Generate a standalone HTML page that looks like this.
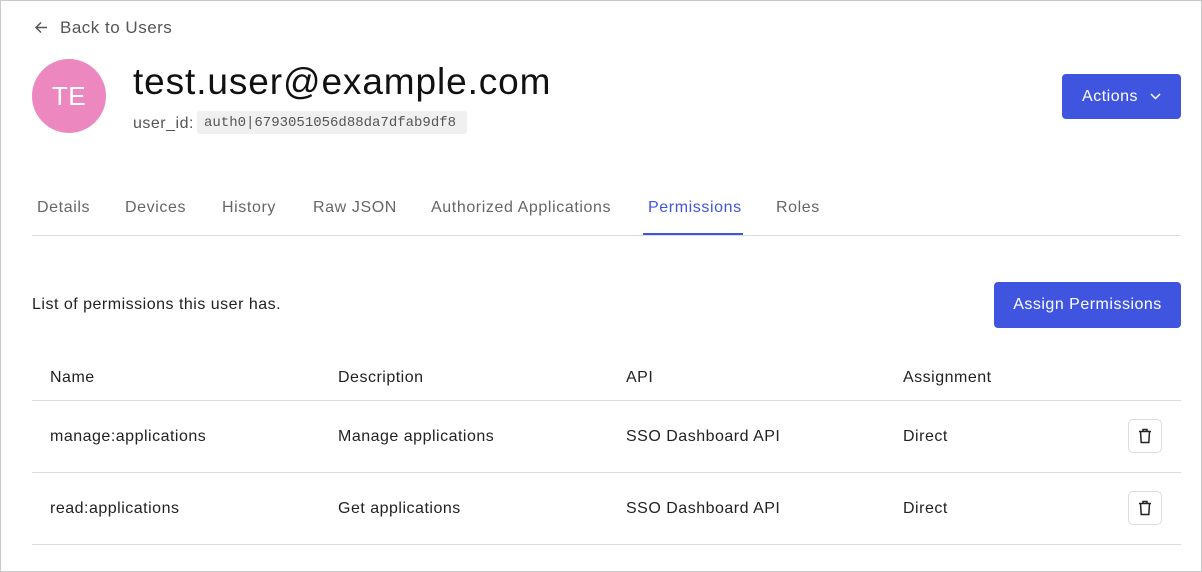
<!DOCTYPE html>
<html><head><style>
*{margin:0;padding:0;box-sizing:border-box}
body{width:1202px;height:572px;background:#fff;font-family:"Liberation Sans",sans-serif;position:relative;overflow:hidden;color:#1e1e1e;letter-spacing:0.5px}
.frame{position:absolute;left:0;top:0;width:1202px;height:572px;border:1px solid #c9c9c9}
.a{position:absolute;white-space:nowrap}
.btn{position:absolute;background:#3f55e0;color:#fff;border-radius:4px;font-size:16px;display:flex;align-items:center;justify-content:center}
.line{position:absolute;left:32px;width:1149px;height:1px;background:#dcdcdc}
.tab{position:absolute;top:199px;font-size:16px;color:#666;letter-spacing:0.6px}
.th{position:absolute;top:369px;font-size:16px;color:#222}
.td{position:absolute;font-size:16px;color:#222}
.trash{position:absolute;left:1128px;width:34px;height:34px;border:1px solid #dcdcdc;border-radius:5px;display:flex;align-items:center;justify-content:center}
</style></head><body>
<div class="frame"></div>
<svg class="a" style="left:34px;top:20px" width="15" height="15" viewBox="0 0 15 15"><path d="M13 7.5H2M7 2.5L2 7.5L7 12.5" stroke="#555" stroke-width="1.5" fill="none"/></svg>
<div class="a" style="left:60px;top:18px;font-size:17px;color:#555">Back to Users</div>
<div class="a" style="left:32px;top:59px;width:74px;height:74px;border-radius:50%;background:#ec88bf;color:#fff;font-size:26px;display:flex;align-items:center;justify-content:center">TE</div>
<div class="a" style="left:133px;top:61px;font-size:37px;color:#111;letter-spacing:0.9px">test.user@example.com</div>
<div class="a" style="left:133px;top:115px;font-size:16px;color:#555">user_id:</div>
<div class="a" style="left:197px;top:111px;width:270px;height:23px;background:#f0f0f0;border-radius:3px;font-family:'Liberation Mono',monospace;font-size:14px;color:#555;padding:4px 0 0 7px;letter-spacing:0">auth0|6793051056d88da7dfab9df8</div>
<div class="btn" style="left:1062px;top:74px;width:119px;height:45px">Actions <svg style="margin-left:12px" width="11" height="7" viewBox="0 0 11 7"><path d="M1 1l4.5 4.5L10 1" stroke="#fff" stroke-width="1.5" fill="none"/></svg></div>
<div class="tab" style="left:37px">Details</div>
<div class="tab" style="left:125px">Devices</div>
<div class="tab" style="left:222px">History</div>
<div class="tab" style="left:313px">Raw JSON</div>
<div class="tab" style="left:431px">Authorized Applications</div>
<div class="tab" style="left:648px;color:#3f55e0">Permissions</div>
<div class="tab" style="left:776px">Roles</div>
<div class="line" style="top:235px"></div>
<div class="a" style="left:643px;top:233px;width:100px;height:2px;background:#3f55e0"></div>
<div class="a" style="left:32px;top:296px;font-size:16px;color:#222">List of permissions this user has.</div>
<div class="btn" style="left:994px;top:282px;width:187px;height:46px">Assign Permissions</div>
<div class="th" style="left:50px">Name</div>
<div class="th" style="left:338px">Description</div>
<div class="th" style="left:626px">API</div>
<div class="th" style="left:903px">Assignment</div>
<div class="line" style="top:400px"></div>
<div class="td" style="left:50px;top:428px">manage:applications</div>
<div class="td" style="left:338px;top:428px">Manage applications</div>
<div class="td" style="left:626px;top:428px">SSO Dashboard API</div>
<div class="td" style="left:903px;top:428px">Direct</div>
<div class="trash" style="top:419px"><svg width="14" height="16" viewBox="0 0 14 16"><path d="M1 3.5h12M5 3.5V1.5h4v2M2.5 3.5l.7 11h7.6l.7-11" stroke="#222" stroke-width="1.5" fill="none"/></svg></div>
<div class="line" style="top:472px"></div>
<div class="td" style="left:50px;top:500px">read:applications</div>
<div class="td" style="left:338px;top:500px">Get applications</div>
<div class="td" style="left:626px;top:500px">SSO Dashboard API</div>
<div class="td" style="left:903px;top:500px">Direct</div>
<div class="trash" style="top:491px"><svg width="14" height="16" viewBox="0 0 14 16"><path d="M1 3.5h12M5 3.5V1.5h4v2M2.5 3.5l.7 11h7.6l.7-11" stroke="#222" stroke-width="1.5" fill="none"/></svg></div>
<div class="line" style="top:544px"></div>
</body></html>
